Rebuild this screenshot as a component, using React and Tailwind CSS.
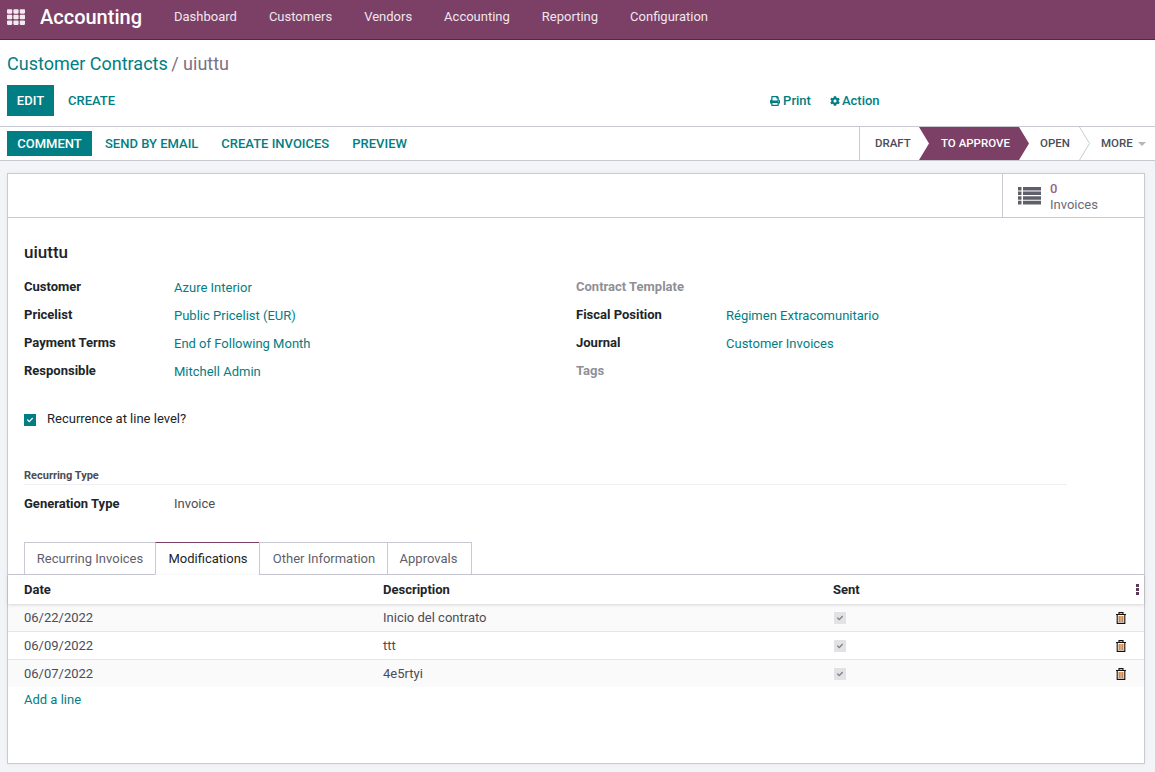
import React from 'react';
import { FaTh, FaPrint, FaCog, FaCheck } from 'react-icons/fa';

const NAV = ['Dashboard', 'Customers', 'Vendors', 'Accounting', 'Reporting', 'Configuration'];
const LEFT_FIELDS = [
  ['Customer', 'Azure Interior'],
  ['Pricelist', 'Public Pricelist (EUR)'],
  ['Payment Terms', 'End of Following Month'],
  ['Responsible', 'Mitchell Admin'],
];
const RIGHT_FIELDS = [
  ['Contract Template', ''],
  ['Fiscal Position', 'Régimen Extracomunitario'],
  ['Journal', 'Customer Invoices'],
  ['Tags', ''],
];
const TABS = [
  { label: 'Recurring Invoices', width: 'w-[132px]' },
  { label: 'Modifications', width: 'w-[105px] pl-px', active: true },
  { label: 'Other Information', width: 'w-[129px] pl-px' },
  { label: 'Approvals', width: 'w-[85px] pr-[2px]' },
];
const ROWS = [
  ['06/22/2022', 'Inicio del contrato'],
  ['06/09/2022', 'ttt'],
  ['06/07/2022', '4e5rtyi'],
];

function Field({ label, value }) {
  return (
    <div className="flex h-7 items-center">
      <div className={`w-[150px] -mt-[2px] font-bold ${value ? 'text-[#212529]' : 'text-[#8f8f97]'}`}>{label}</div>
      <div className="text-[#017e84]">{value}</div>
    </div>
  );
}

function SentBox() {
  return (
    <div className="flex h-3 w-3 items-center justify-center bg-[#e2e2e4] text-[#7a7a82]">
      <FaCheck className="h-[6px] w-[6px]" />
    </div>
  );
}

function ListIcon() {
  return (
    <svg viewBox="0 0 23 18" className="h-[18px] w-[23px] text-[#5f5f6b]" fill="currentColor">
      <path d="M0 0h3.5v3.5H0zM5 0h18v3.5H5zM0 4.6h3.5v3.5H0zM5 4.6h18v3.5H5zM0 9.2h3.5v3.5H0zM5 9.2h18v3.5H5zM0 13.8h3.5v3.7H0zM5 13.8h18v3.7H5z" />
    </svg>
  );
}

function TrashIcon() {
  return (
    <svg viewBox="0 0 10 12" className="h-3 w-[10px]" fill="none">
      <path d="M0 2.5h10M3 2.3V0.6h4v1.7M1.2 2.5v8.9h7.6V2.5" stroke="#14100e" strokeWidth="1.1" />
      <path d="M3.2 4v6M5 4v6M6.8 4v6" stroke="#c0620f" strokeWidth="1.1" />
    </svg>
  );
}

export default function App() {
  return (
    <div className="flex h-[772px] flex-col overflow-hidden bg-[#f3f4f8] font-['Roboto',sans-serif] text-[13px] text-[#4c4c57]">
      {/* Navbar */}
      <div className="flex h-10 shrink-0 items-center border-b border-[#4f2a43] bg-[#7c3f66] pb-[5px] text-white">
        <FaTh className="ml-[7px] h-[18px] w-[18px] text-[#f3eaf0]" />
        <span className="ml-[15px] w-[32px] whitespace-nowrap text-[20px] font-medium leading-none">Accounting</span>
        <div className="ml-[102px] flex gap-8 text-[#f0e6ec]">
          {NAV.map((item) => (
            <span key={item}>{item}</span>
          ))}
        </div>
      </div>

      {/* Control panel */}
      <div className="h-[87px] shrink-0 border-b border-[#c9c9d3] bg-white px-[7px]">
        <div className="pt-[12px] text-[18px] leading-[24px]">
          <span className="text-[#017e84]">Customer Contracts</span>
          <span className="-ml-px text-[#7d6f85]"> / uiuttu</span>
        </div>
        <div className="relative mt-[9px] flex h-[31px] items-center font-medium text-[#017e84]">
          <button type="button" className="flex h-[31px] w-[47px] items-center justify-center bg-[#017e84] font-medium text-white">EDIT</button>
          <button type="button" className="ml-[14px] font-medium">CREATE</button>
          <div className="ml-[655px] flex items-center gap-[3px]">
            <FaPrint className="h-[10px] w-[10px]" />
            <span>Print</span>
          </div>
          <div className="ml-[19px] flex items-center gap-[2px]">
            <FaCog className="h-[10px] w-[10px]" />
            <span>Action</span>
          </div>
        </div>
      </div>

      {/* Status bar */}
      <div className="flex h-[34px] shrink-0 items-center border-b border-[#c9c9d3] bg-white pl-[7px] text-[13px] font-medium text-[#017e84]">
        <button type="button" className="flex h-[25px] w-[85px] items-center justify-center bg-[#017e84] text-white">COMMENT</button>
        <span className="ml-[13px]">SEND BY EMAIL</span>
        <span className="ml-[23px]">CREATE INVOICES</span>
        <span className="ml-[23px]">PREVIEW</span>
        <div className="ml-auto flex h-full w-[296px] items-center border-l border-[#c9c9d3] text-[11.5px] text-[#4c4c57]">
          <span className="ml-[15px] w-[44px]">DRAFT</span>
          <div className="flex h-full w-[110px] items-center bg-[#7c3f66] pl-[22px] text-white [clip-path:polygon(0_0,100px_0,110px_50%,100px_100%,0_100%,10px_50%)]">
            TO APPROVE
          </div>
          <span className="ml-[11px] w-[39px]">OPEN</span>
          <svg viewBox="0 0 11 33" className="h-full w-[11px] text-[#c9c9d3]" fill="none" stroke="currentColor">
            <path d="M0.5 0 L10.5 16.5 L0.5 33" />
          </svg>
          <span className="ml-[11px]">MORE</span>
          <span className="ml-[5px] h-0 w-0 border-x-[4px] border-t-[4px] border-x-transparent border-t-[#b5b5bb]" />
        </div>
      </div>

      {/* Sheet */}
      <div className="mt-3 mb-2 ml-[7px] mr-[10px] flex h-[591px] flex-col border border-[#c9c9d3] bg-white shadow-[0_0_6px_rgba(0,0,0,0.04)]">
        <div className="flex h-[44px] shrink-0 justify-end border-b border-[#c9c9d3]">
          <div className="flex w-[142px] items-center border-l border-[#c9c9d3] pl-[15px]">
            <ListIcon />
            <div className="ml-[9px] pt-[2px] leading-[16px]">
              <div className="font-medium text-[#9a6287]">0</div>
              <div className="text-[#6b6b76]">Invoices</div>
            </div>
          </div>
        </div>

        <div className="px-4">
          <div className="mt-[22px] text-[17px] font-medium leading-[24px] text-[#212529]">uiuttu</div>
          <div className="mt-[10px] flex">
            <div className="w-[552px]">
              {LEFT_FIELDS.map(([label, value]) => (
                <Field key={label} label={label} value={value} />
              ))}
            </div>
            <div>
              {RIGHT_FIELDS.map(([label, value]) => (
                <Field key={label} label={label} value={value} />
              ))}
            </div>
          </div>

          <div className="mt-[24px] flex h-[20px] items-center">
            <div className="flex h-3 w-3 items-center justify-center bg-[#017e84] text-white">
              <FaCheck className="h-[6px] w-[6px]" />
            </div>
            <span className="ml-[11px] -mt-[2px] text-[#212529]">Recurrence at line level?</span>
          </div>

          <div className="mt-[38px] w-[1043px] border-b border-[#f0f0f3] text-[11px] font-bold leading-[16px] text-[#4c4c57]">
            Recurring Type
          </div>
          <div className="mt-[5px] flex h-7 items-center">
            <div className="w-[150px] font-bold text-[#212529]">Generation Type</div>
            <div>Invoice</div>
          </div>
        </div>

        {/* Tabs */}
        <div className="mt-[24px] flex h-[33px] shrink-0 border-b border-[#c9c9d3] pl-4">
          {TABS.map((tab) => (
            <div
              key={tab.label}
              className={`-ml-px flex h-[33px] items-center justify-center border border-[#c9c9d3] first:ml-0 ${tab.width} ${
                tab.active ? 'border-t-[#7c3f66] border-b-white bg-white text-[#212529]' : 'text-[#5f5f6b]'
              }`}
            >
              {tab.label}
            </div>
          ))}
        </div>

        {/* Lines */}
        <div className="relative z-10 grid h-[29px] shrink-0 grid-cols-[372px_451px_282px_1fr] items-center font-bold text-[#212529] shadow-[0_1px_3px_rgba(0,0,0,0.15)]">
          <div className="pl-4">Date</div>
          <div className="pl-[3px]">Description</div>
          <div className="pl-[2px]">Sent</div>
          <div className="flex justify-end pr-[5px]">
            <svg viewBox="0 0 3 11" className="h-[11px] w-[3px]" fill="#5a3a55">
              <path d="M0 0h3v3H0zM0 4h3v3H0zM0 8h3v3H0z" />
            </svg>
          </div>
        </div>
        {ROWS.map(([date, description], i) => (
          <div
            key={date}
            className={`grid shrink-0 grid-cols-[372px_451px_282px_1fr] items-center ${
              i < 2 ? 'h-7 border-b border-[#e6e6e8]' : 'h-[27px]'
            } ${i % 2 === 0 ? 'bg-[#fafafb]' : 'bg-white'}`}
          >
            <div className="pl-4">{date}</div>
            <div className="pl-[3px]">{description}</div>
            <div className="pl-[3px]"><SentBox /></div>
            <div className="pl-[3px]">
              <TrashIcon />
            </div>
          </div>
        ))}
        <div className="mt-[3px] pl-4 text-[#017e84]">Add a line</div>
      </div>
    </div>
  );
}
